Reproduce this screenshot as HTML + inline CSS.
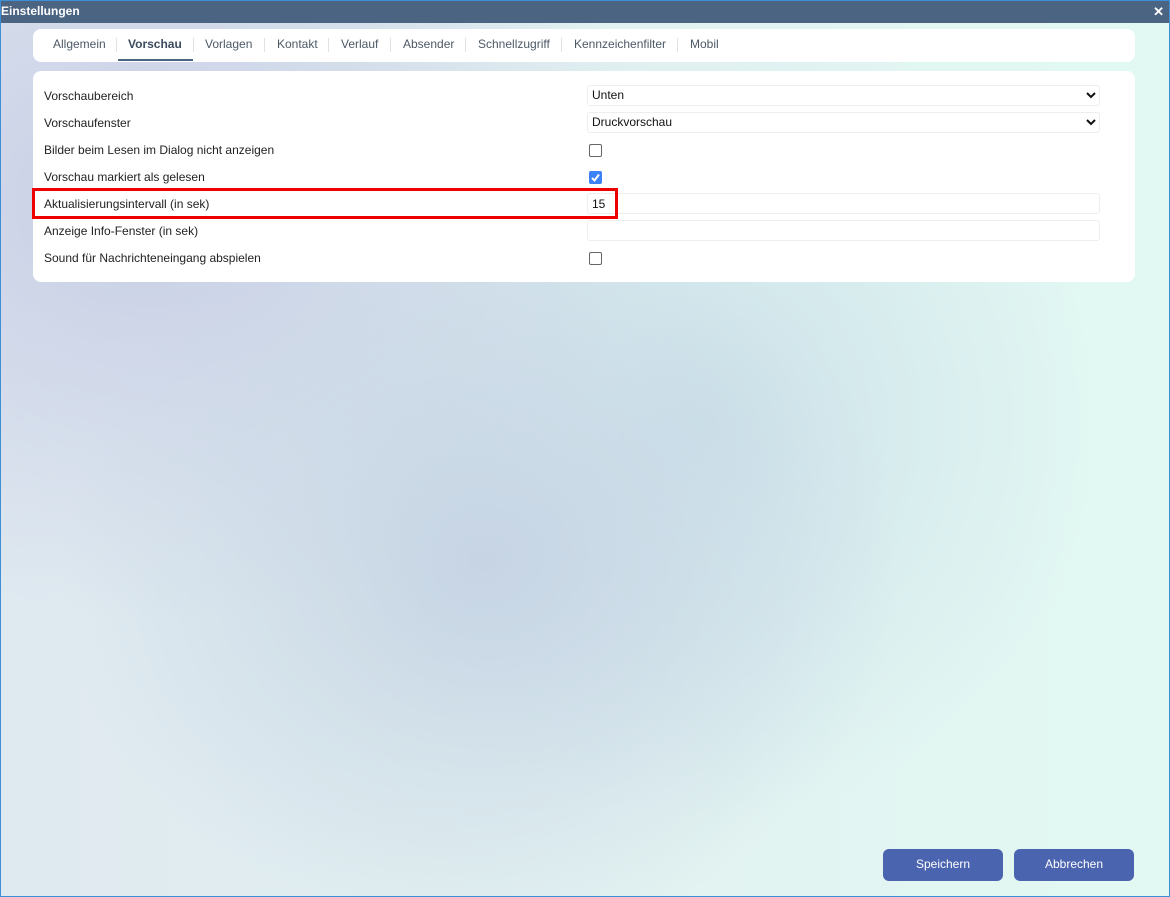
<!DOCTYPE html>
<html><head><meta charset="utf-8"><style>
*{box-sizing:border-box;margin:0;padding:0}
body{width:1170px;height:897px;overflow:hidden;font-family:"Liberation Sans",Arial,sans-serif;font-size:12px;color:#222}
.win{position:absolute;left:0;top:0;width:1170px;height:897px;border:1px solid #3d8fd6;overflow:hidden;
background:
radial-gradient(ellipse 420px 380px at 480px 560px,#c6d4e4 0%,rgba(198,212,228,0) 100%),
radial-gradient(ellipse 500px 420px at 150px 200px,#c7cde5 0%,rgba(199,205,229,0) 100%),
radial-gradient(ellipse 400px 400px at 700px 420px,#cde3ea 0%,rgba(205,227,234,0) 100%),
linear-gradient(90deg,#dfe9f0 0%,#e2f2f1 55%,#e2f9f3 100%);}
.title{position:absolute;left:-1px;top:-1px;width:1170px;height:23px;background:#4a6481;color:#fff;font-weight:bold;font-size:12px;line-height:22px;padding-left:1px}
.x{position:absolute;right:6px;top:0;color:#fff;font-weight:bold;font-size:13px;line-height:23px}
.card{position:absolute;left:32px;width:1102px;background:#fff;border-radius:8px}
.tabs{top:28px;height:33px}
.tab{position:absolute;top:8px;color:#4d5966;font-size:12px}
.sep{position:absolute;top:9px;width:1px;height:14px;background:#e2e2e2}
.ul{position:absolute;left:85px;top:30px;width:75px;height:2px;background:#4a6481}
.content{top:70px;height:211px}
.lbl{position:absolute;left:11px;font-size:12px;color:#222}
.inp{position:absolute;left:554px;width:513px;height:21px;border:1px solid #eee;border-radius:3px;padding-left:4px;line-height:19px;font-size:12px;color:#111}
.cb{position:absolute;left:556px;width:13px;height:13px;border:1px solid #666;border-radius:2px;background:#fff}
.cbon{background:#3b82f6;border-color:#3b82f6}
.red{position:absolute;left:31px;top:187px;width:586px;height:31px;border:3px solid #e00}
.btn{position:absolute;top:848px;width:120px;height:32px;border-radius:6px;background:#4b64b0;color:#fff;text-align:center;line-height:31px;font-size:12px}
</style></head><body><div class="win">
<div class="title">Einstellungen<span class="x">✕</span></div>
<div class="card tabs">
<span class="tab" style="left:20px">Allgemein</span><span class="sep" style="left:83px"></span>
<span class="tab" style="left:95px;font-weight:bold;color:#3c4b5e">Vorschau</span><span class="sep" style="left:160px"></span>
<span class="tab" style="left:172px">Vorlagen</span><span class="sep" style="left:231px"></span>
<span class="tab" style="left:244px">Kontakt</span><span class="sep" style="left:295px"></span>
<span class="tab" style="left:308px">Verlauf</span><span class="sep" style="left:357px"></span>
<span class="tab" style="left:370px">Absender</span><span class="sep" style="left:432px"></span>
<span class="tab" style="left:445px">Schnellzugriff</span><span class="sep" style="left:528px"></span>
<span class="tab" style="left:541px">Kennzeichenfilter</span><span class="sep" style="left:644px"></span>
<span class="tab" style="left:657px">Mobil</span>
<div class="ul"></div>
</div>
<div class="card content">
<span class="lbl" style="top:18px">Vorschaubereich</span>
<div class="inp" style="top:14px">Unten<svg style="position:absolute;right:3px;top:6px" width="10" height="7" viewBox="0 0 10 7"><path d="M1 1l4 4 4-4" stroke="#111" stroke-width="2" fill="none"/></svg></div>
<span class="lbl" style="top:45px">Vorschaufenster</span>
<div class="inp" style="top:41px">Druckvorschau<svg style="position:absolute;right:3px;top:6px" width="10" height="7" viewBox="0 0 10 7"><path d="M1 1l4 4 4-4" stroke="#111" stroke-width="2" fill="none"/></svg></div>
<span class="lbl" style="top:72px">Bilder beim Lesen im Dialog nicht anzeigen</span>
<div class="cb" style="top:73px"></div>
<span class="lbl" style="top:99px">Vorschau markiert als gelesen</span>
<div class="cb cbon" style="top:100px"><svg width="11" height="11" viewBox="0 0 11 11" style="position:absolute;left:0;top:0"><path d="M2 6l2.5 2.5L9 2.5" stroke="#fff" stroke-width="2" fill="none"/></svg></div>
<span class="lbl" style="top:126px">Aktualisierungsintervall (in sek)</span>
<div class="inp" style="top:122px;line-height:21px">15</div>
<span class="lbl" style="top:153px">Anzeige Info-Fenster (in sek)</span>
<div class="inp" style="top:149px"></div>
<span class="lbl" style="top:180px">Sound für Nachrichteneingang abspielen</span>
<div class="cb" style="top:181px"></div>
</div>
<div class="red"></div>
<div class="btn" style="left:882px">Speichern</div>
<div class="btn" style="left:1013px">Abbrechen</div>
</div></body></html>
